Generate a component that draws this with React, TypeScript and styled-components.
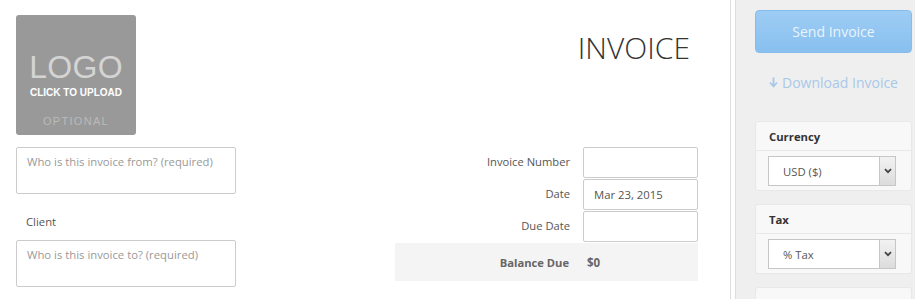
import React from 'react';
import styled, { createGlobalStyle } from 'styled-components';

const GlobalStyle = createGlobalStyle`
  html, body {
    margin: 0;
    padding: 0;
    background: #fff;
  }
  body {
    font-family: 'Open Sans', 'Liberation Sans', sans-serif;
    color: #555;
  }
`;

const Page = styled.div`
  display: flex;
  width: 915px;
  height: 299px;
  overflow: hidden;
`;

const Main = styled.main`
  width: 730px;
  flex-shrink: 0;
  box-sizing: border-box;
  padding: 15px 32px 0 16px;
  display: flex;
  flex-direction: column;
  gap: 12px;
`;

const Header = styled.div`
  display: flex;
  justify-content: space-between;
  align-items: flex-start;
`;

const Logo = styled.div`
  width: 120px;
  height: 120px;
  background: #999;
  border-radius: 3px;
  display: flex;
  flex-direction: column;
  align-items: center;
  font-family: 'Liberation Sans', Arial, sans-serif;
`;

const LogoWord = styled.div`
  margin-top: 36px;
  font-size: 32px;
  line-height: 32px;
  letter-spacing: 0.3px;
  color: #d4d4d4;
`;

const LogoHint = styled.div`
  margin-top: 4px;
  font-size: 10px;
  line-height: 12px;
  font-weight: bold;
  color: #fff;
`;

const LogoOptional = styled.div`
  margin-top: 16px;
  font-size: 11px;
  line-height: 12px;
  letter-spacing: 1.3px;
  color: #bababa;
`;

const Title = styled.h1`
  margin: 13px 8px 0 0;
  font-size: 30px;
  line-height: 40px;
  font-weight: 300;
  color: #333;
`;

const Body = styled.div`
  display: flex;
  justify-content: space-between;
`;

const Parties = styled.div`
  width: 220px;
  display: flex;
  flex-direction: column;
`;

const PartyBox = styled.div`
  height: 47px;
  box-sizing: border-box;
  border: 1px solid #ccc;
  border-radius: 2px;
  padding: 6px 10px;
  font-size: 11.3px;
  line-height: 16px;
  color: #999;
`;

const FieldLabel = styled.div`
  padding: 19px 10px 10px;
  font-size: 11.3px;
  line-height: 17px;
  color: #555;
`;

const Meta = styled.div`
  width: 303px;
  display: grid;
  grid-template-columns: 1fr 115px;
  column-gap: 13px;
  grid-auto-rows: 32px;
`;

const MetaLabel = styled.div<{ $bold?: boolean }>`
  display: flex;
  align-items: center;
  justify-content: flex-end;
  padding-bottom: ${p => (p.$bold ? 0 : 3)}px;
  font-size: 11.2px;
  font-weight: ${p => (p.$bold ? 700 : 400)};
  color: ${p => (p.$bold ? '#666' : '#555')};
`;

const MetaInput = styled.div`
  box-sizing: border-box;
  border: 1px solid #ccc;
  border-radius: 2px;
  height: 31px;
  padding: 0 10px;
  display: flex;
  align-items: center;
  font-size: 11.3px;
  color: #555;
`;

const BalanceRow = styled.div`
  grid-column: 1 / -1;
  height: 38px;
  background: #f4f4f4;
  display: grid;
  grid-template-columns: 1fr 111px;
  column-gap: 18px;
`;

const BalanceValue = styled.div`
  display: flex;
  align-items: center;
  font-size: 11.5px;
  font-weight: 700;
  color: #666;
`;

const Sidebar = styled.aside`
  flex: 1;
  background: #efefef;
  border-left: 1px solid #ddd;
  box-shadow: inset 4px 0 0 #fff, inset 5px 0 0 #ddd;
  padding: 10px 3px 0 24px;
`;

const SendButton = styled.button`
  display: block;
  width: 100%;
  height: 43px;
  border: 1px solid #86bdec;
  border-radius: 4px;
  background: linear-gradient(#9dccf4, #89c0ef);
  color: #eaf4fd;
  font-family: 'Open Sans', sans-serif;
  font-size: 14px;
  padding: 0;
`;

const DownloadLink = styled.a`
  margin: 20px 0 29px;
  display: flex;
  justify-content: center;
  align-items: center;
  gap: 4px;
  font-size: 14px;
  line-height: 19px;
  color: #a8c8e8;
`;

const Panel = styled.section`
  background: #f8f8f8;
  border: 1px solid #e8e8e8;
  border-radius: 3px;
  margin-bottom: 13px;
`;

const PanelTitle = styled.div`
  height: 28px;
  padding: 0 13px;
  display: flex;
  align-items: center;
  border-bottom: 1px solid #e8e8e8;
  font-size: 11.3px;
  font-weight: 700;
  color: #333;
`;

const PanelBody = styled.div`
  padding: 5px 15px 4px 12px;
`;

const Select = styled.div`
  height: 30px;
  box-sizing: border-box;
  border: 1px solid #c6c6c6;
  background: #fff;
  display: flex;
  font-size: 11.3px;
  color: #555;
`;

const SelectValue = styled.div`
  flex: 1;
  display: flex;
  align-items: center;
  padding-left: 14px;
`;

const SelectArrow = styled.div`
  width: 15px;
  border-left: 1px solid #c6c6c6;
  background: linear-gradient(#f2f2f2, #dcdcdc);
  display: flex;
  align-items: center;
  justify-content: center;
`;

const Chevron = () => (
  <svg width="8" height="6" viewBox="0 0 8 6">
    <path d="M1 1.2 L4 4.2 L7 1.2" fill="none" stroke="#444" strokeWidth="1.8" />
  </svg>
);

const ArrowDown = () => (
  <svg width="9" height="11" viewBox="0 0 9 11">
    <path d="M4.5 0.5 V9 M1 5.5 L4.5 9.5 L8 5.5" fill="none" stroke="#a8c8e8" strokeWidth="1.8" />
  </svg>
);

const SelectBox = ({ value }: { value: string }) => (
  <Select>
    <SelectValue>{value}</SelectValue>
    <SelectArrow>
      <Chevron />
    </SelectArrow>
  </Select>
);

export default function App() {
  return (
    <>
      <GlobalStyle />
      <Page>
        <Main>
          <Header>
            <Logo>
              <LogoWord>LOGO</LogoWord>
              <LogoHint>CLICK TO UPLOAD</LogoHint>
              <LogoOptional>OPTIONAL</LogoOptional>
            </Logo>
            <Title>INVOICE</Title>
          </Header>
          <Body>
            <Parties>
              <PartyBox>Who is this invoice from? (required)</PartyBox>
              <FieldLabel>Client</FieldLabel>
              <PartyBox>Who is this invoice to? (required)</PartyBox>
            </Parties>
            <Meta>
              <MetaLabel>Invoice Number</MetaLabel>
              <MetaInput />
              <MetaLabel>Date</MetaLabel>
              <MetaInput>Mar 23, 2015</MetaInput>
              <MetaLabel>Due Date</MetaLabel>
              <MetaInput />
              <BalanceRow>
                <MetaLabel $bold>Balance Due</MetaLabel>
                <BalanceValue>$0</BalanceValue>
              </BalanceRow>
            </Meta>
          </Body>
        </Main>
        <Sidebar>
          <SendButton>Send Invoice</SendButton>
          <DownloadLink>
            <ArrowDown />
            Download Invoice
          </DownloadLink>
          <Panel>
            <PanelTitle>Currency</PanelTitle>
            <PanelBody>
              <SelectBox value="USD ($)" />
            </PanelBody>
          </Panel>
          <Panel>
            <PanelTitle>Tax</PanelTitle>
            <PanelBody>
              <SelectBox value="% Tax" />
            </PanelBody>
          </Panel>
          <Panel>
            <PanelTitle>Shipping</PanelTitle>
            <PanelBody>
              <SelectBox value="Flat Amount" />
            </PanelBody>
          </Panel>
        </Sidebar>
      </Page>
    </>
  );
}
